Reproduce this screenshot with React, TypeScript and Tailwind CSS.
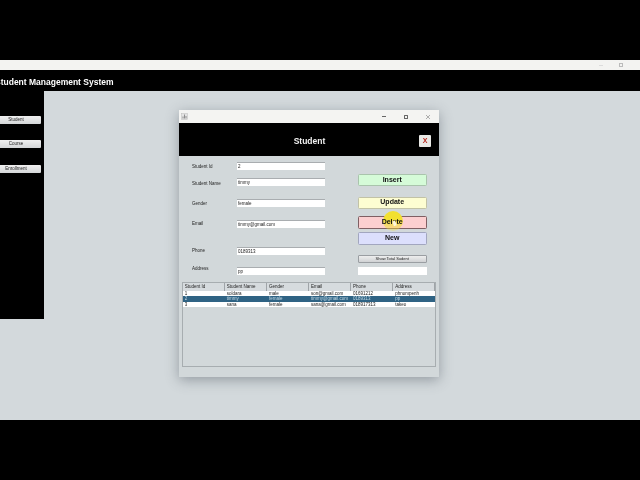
import React from 'react';

const sans = "font-['Liberation_Sans',sans-serif]";

const fields = [
  { label: 'Student Id', value: '2', row: 'mt-[5.7px]', labelCls: 'translate-y-[0.5px]' },
  { label: 'Student Name', value: 'timmy', row: 'mt-[7.5px]', labelCls: 'translate-y-[1.5px]' },
  { label: 'Gender', value: 'female', row: 'mt-[12.5px]', labelCls: 'translate-y-[0.5px]' },
  { label: 'Email', value: 'timmy@gmail.com', row: 'mt-[12.8px]', labelCls: '' },
  { label: 'Phone', value: '0189313', row: 'mt-[18.2px]', labelCls: '' },
  { label: 'Address', value: 'pp', row: 'mt-[11.5px]', labelCls: '-translate-y-[2px]' },
];

const columns = ['Student Id', 'Student Name', 'Gender', 'Email', 'Phone', 'Address'];

const rows = [
  ['1', 'soldara', 'male', 'son@gmail.com', '01691212', 'phnompenh'],
  ['2', 'timmy', 'female', 'timmy@gmail.com', '0189313', 'pp'],
  ['3', 'sana', 'female', 'sana@gmail.com', '018917313', 'takeo'],
];

function SideButton({ label, cls }: { label: string; cls: string }) {
  return (
    <div className={`-ml-[9px] flex h-[8px] w-[50px] items-center justify-center rounded-[1px] bg-gradient-to-b from-[#f0f0f0] to-[#d4d6d8] text-[4.5px] text-[#222] ${cls}`}>
      {label}
    </div>
  );
}

function ActionButton({ label, cls, children }: { label: string; cls: string; children?: React.ReactNode }) {
  return (
    <div className={`relative flex w-[69px] items-center justify-center rounded-[1.5px] border-[0.5px] font-bold text-[#111] ${cls}`}>
      {children}
      <span className="relative">{label}</span>
    </div>
  );
}

export default function App() {
  return (
    <div className={`relative flex h-[480px] w-[640px] flex-col overflow-hidden bg-black blur-[0.25px] ${sans}`}>
      <div className="mt-[60px] flex h-[10px] items-center justify-end gap-[16px] bg-[#f3f3f1] pr-[17px]">
        <div className="h-[1px] w-[4px] bg-[#dcdcdc]" />
        <div className="h-[4px] w-[4px] border-[0.5px] border-[#bbb]" />
      </div>
      <div className="flex h-[21px] items-center bg-black pt-[3px]">
        <span className="-ml-[5px] text-[8.5px] font-bold whitespace-nowrap text-white">Student Management System</span>
      </div>
      <div className="flex h-[329px] items-start bg-[#d3d9dc]">
        <div className="flex h-[228px] w-[44px] flex-col bg-black">
          <SideButton label="Student" cls="mt-[25px]" />
          <SideButton label="Course" cls="mt-[16px]" />
          <SideButton label="Enrollment" cls="mt-[17px]" />
        </div>
      </div>

      <div className="absolute top-[110px] left-[179px] flex h-[267px] w-[260px] flex-col bg-[#d2d8da] shadow-[0_3px_12px_rgba(70,80,90,0.45)]">
        <div className="flex h-[13px] items-center bg-[#f4f4f2] pl-[2px]">
          <svg width="7" height="7" viewBox="0 0 7 7">
            <rect x="0.5" y="0.5" width="6" height="6" fill="#e4e4e4" stroke="#bbb" strokeWidth="0.5" />
            <path d="M2 5.5V3.5M3.5 5.5V1.5M5 5.5V3" stroke="#777" strokeWidth="0.8" />
          </svg>
          <div className="ml-auto flex items-center gap-[18px] pr-[9px]">
            <div className="h-[0.7px] w-[4px] bg-[#666]" />
            <div className="h-[4px] w-[4px] rounded-[0.5px] border-[0.5px] border-[#666]" />
            <svg width="4" height="4" viewBox="0 0 4 4">
              <path d="M0 0L4 4M4 0L0 4" stroke="#666" strokeWidth="0.5" />
            </svg>
          </div>
        </div>
        <div className="flex h-[33px] items-center justify-center bg-black pt-[3px]">
          <span className="ml-[1px] text-[8.5px] font-bold text-[#f2f2f2]">Student</span>
          <div className="absolute top-[25px] right-[8px] flex h-[12px] w-[12px] items-center justify-center rounded-[1px] bg-[#e9e9e6] text-[7px] font-bold text-[#b8261e]">
            X
          </div>
        </div>

        <div className="flex">
          <div className="ml-[13px] flex w-[133px] flex-col">
            {fields.map((f) => (
              <div key={f.label} className={`flex h-[8.5px] items-center ${f.row}`}>
                <span className={`w-[45px] text-[4.5px] whitespace-nowrap text-[#222] ${f.labelCls}`}>{f.label}</span>
                <div className="flex h-[8.5px] w-[88px] items-center border-t-[0.5px] border-[#a9adb0] bg-white pt-[1px] pl-[1px] text-[4.5px] text-[#222]">
                  {f.value}
                </div>
              </div>
            ))}
          </div>
          <div className="ml-[32.7px] flex flex-col text-[7px]">
            <ActionButton label="Insert" cls="mt-[17.7px] h-[12.4px] border-[#a9c4ac] bg-[#d5fbd8]" />
            <ActionButton label="Update" cls="mt-[10.5px] h-[12.2px] border-[#c2c2a6] bg-[#fdfdd2]" />
            <ActionButton label="Delete" cls="mt-[7.6px] h-[12.4px] border-[#7f5f63] bg-[#fccfd0]">
              {/* mouse highlight from the recording */}
              <div className="absolute -top-[6.5px] left-[24px] h-[20px] w-[20px] rounded-full bg-gradient-to-b from-[#f2e030] from-40% to-[#f2e030]/25" />
              <div className="absolute top-[4px] left-[34px] z-10 h-[5px] w-[2.5px] rotate-[-20deg] bg-[#fdf8dc]" />
            </ActionButton>
            <ActionButton label="New" cls="mt-[3.6px] h-[12.4px] border-[#a2a6bf] bg-[#dcdffc]" />
            <div className="mt-[10px] flex h-[8px] w-[69px] items-center justify-center rounded-[1px] border-[0.5px] border-[#9a9ea2] bg-gradient-to-b from-[#eeeeee] to-[#d0d2d4] text-[4px] text-[#222]">
              Show Total Sudent
            </div>
            <div className="mt-[4px] h-[8px] w-[69px] bg-white" />
          </div>
        </div>

        <div className="mx-[2.7px] mt-[7px] h-[85px] border-[0.5px] border-[#a7adb0] text-[4.5px]">
          <div className="grid h-[7.5px] grid-cols-6 bg-[#d6dbde] text-[#222]">
            {columns.map((c) => (
              <div key={c} className="flex items-center border-r-[0.5px] border-[#9fa4a8] pl-[2px] whitespace-nowrap">{c}</div>
            ))}
          </div>
          {rows.map((r, i) => (
            <div key={r[0]} className={`grid h-[5.6px] grid-cols-6 items-center ${i === 1 ? 'bg-[#2f6384] text-[#c5dbe6]' : 'bg-white text-[#222]'}`}>
              {r.map((cell, j) => (
                <div key={j} className="pl-[2px] leading-[5.6px]">{cell}</div>
              ))}
            </div>
          ))}
        </div>
      </div>
    </div>
  );
}
